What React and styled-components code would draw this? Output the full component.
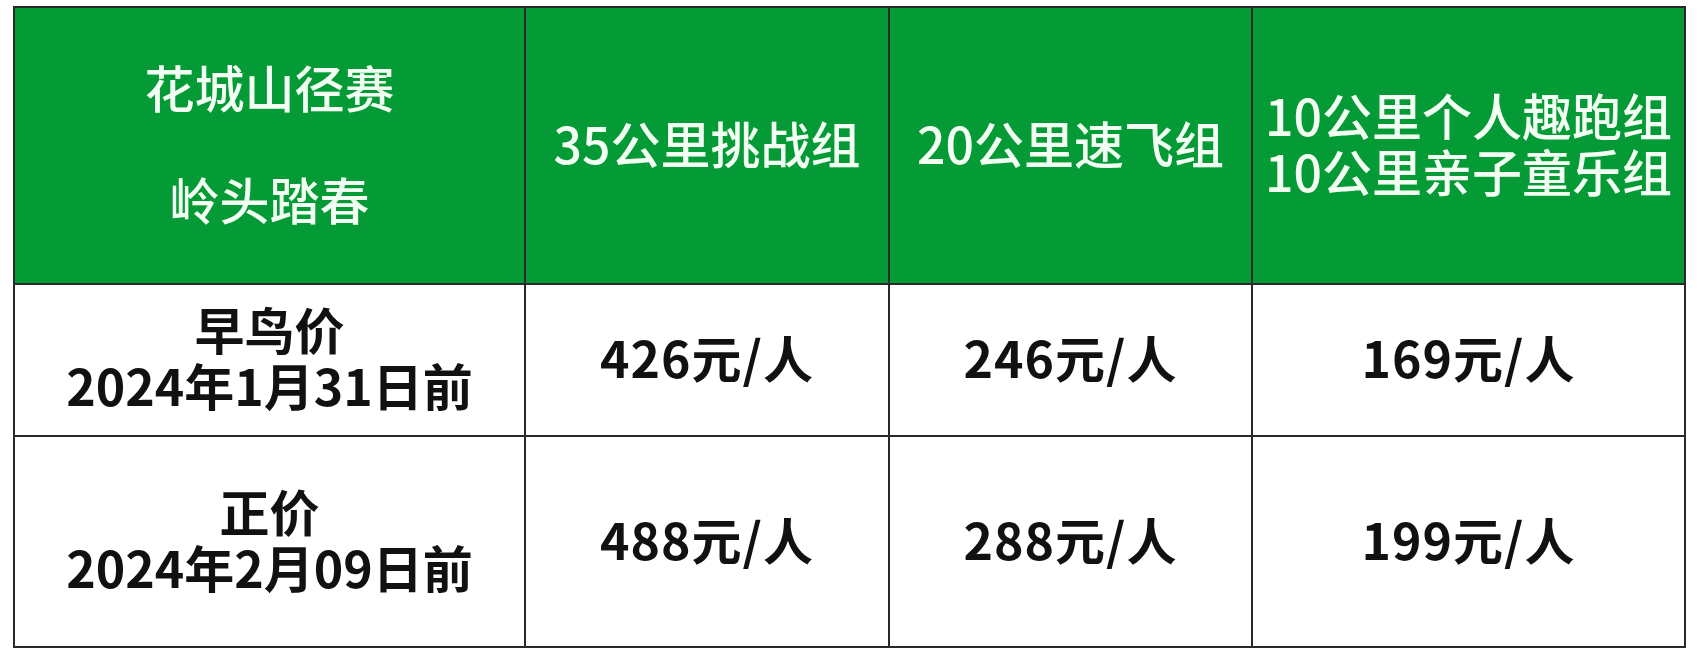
import React from "react";
import styled, { createGlobalStyle } from "styled-components";

const GlobalStyle = createGlobalStyle`
  html, body { margin: 0; padding: 0; background: #ffffff; }
  body { font-family: "Noto Sans CJK SC", "Noto Sans", sans-serif; }
`;

const Page = styled.div`
  padding: 6px 0 0 13px;
`;

const Table = styled.div`
  display: grid;
  grid-template-columns: 511px 364px 363px 433px;
  grid-template-rows: 277px 152px 211px;
  width: max-content;
  border-left: 2px solid #2a2a2a;
  border-top: 2px solid #2a2a2a;
`;

const Cell = styled.div`
  display: flex;
  flex-direction: column;
  align-items: center;
  justify-content: center;
  text-align: center;
  padding-bottom: 8px;
  box-sizing: border-box;
  border-right: 2px solid #2a2a2a;
  border-bottom: 2px solid #2a2a2a;
  background: ${(p) => (p.$head ? "#049a35" : "#ffffff")};
  color: ${(p) => (p.$head ? "#f4fff4" : "#111111")};
  font-family: "Noto Sans CJK SC", sans-serif;
  font-size: 50px;
  font-weight: ${(p) => p.$weight || 500};
  letter-spacing: ${(p) => p.$spacing || "0px"};
  line-height: 56px;
  white-space: nowrap;
`;

const Line = styled.span`
  display: block;
`;

const Spacer = styled.span`
  display: block;
  height: 56px;
`;

const prices = [
  { label: "早鸟价", date: "2024年1月31日前", values: ["426元/人", "246元/人", "169元/人"] },
  { label: "正价", date: "2024年2月09日前", values: ["488元/人", "288元/人", "199元/人"] },
];

export default function App() {
  return (
    <>
      <GlobalStyle />
      <Page>
        <Table>
          <Cell $head>
            <Line>花城山径赛</Line>
            <Spacer />
            <Line>岭头踏春</Line>
          </Cell>
          <Cell $head>
            <Line>35公里挑战组</Line>
          </Cell>
          <Cell $head>
            <Line>20公里速飞组</Line>
          </Cell>
          <Cell $head>
            <Line>10公里个人趣跑组</Line>
            <Line>10公里亲子童乐组</Line>
          </Cell>
          {prices.map((row) => (
            <React.Fragment key={row.label}>
              <Cell $weight={700}>
                <Line>{row.label}</Line>
                <Line>{row.date}</Line>
              </Cell>
              {row.values.map((v, i) => (
                <Cell key={i} $weight={700} $spacing="1px">
                  <Line>{v}</Line>
                </Cell>
              ))}
            </React.Fragment>
          ))}
        </Table>
      </Page>
    </>
  );
}
